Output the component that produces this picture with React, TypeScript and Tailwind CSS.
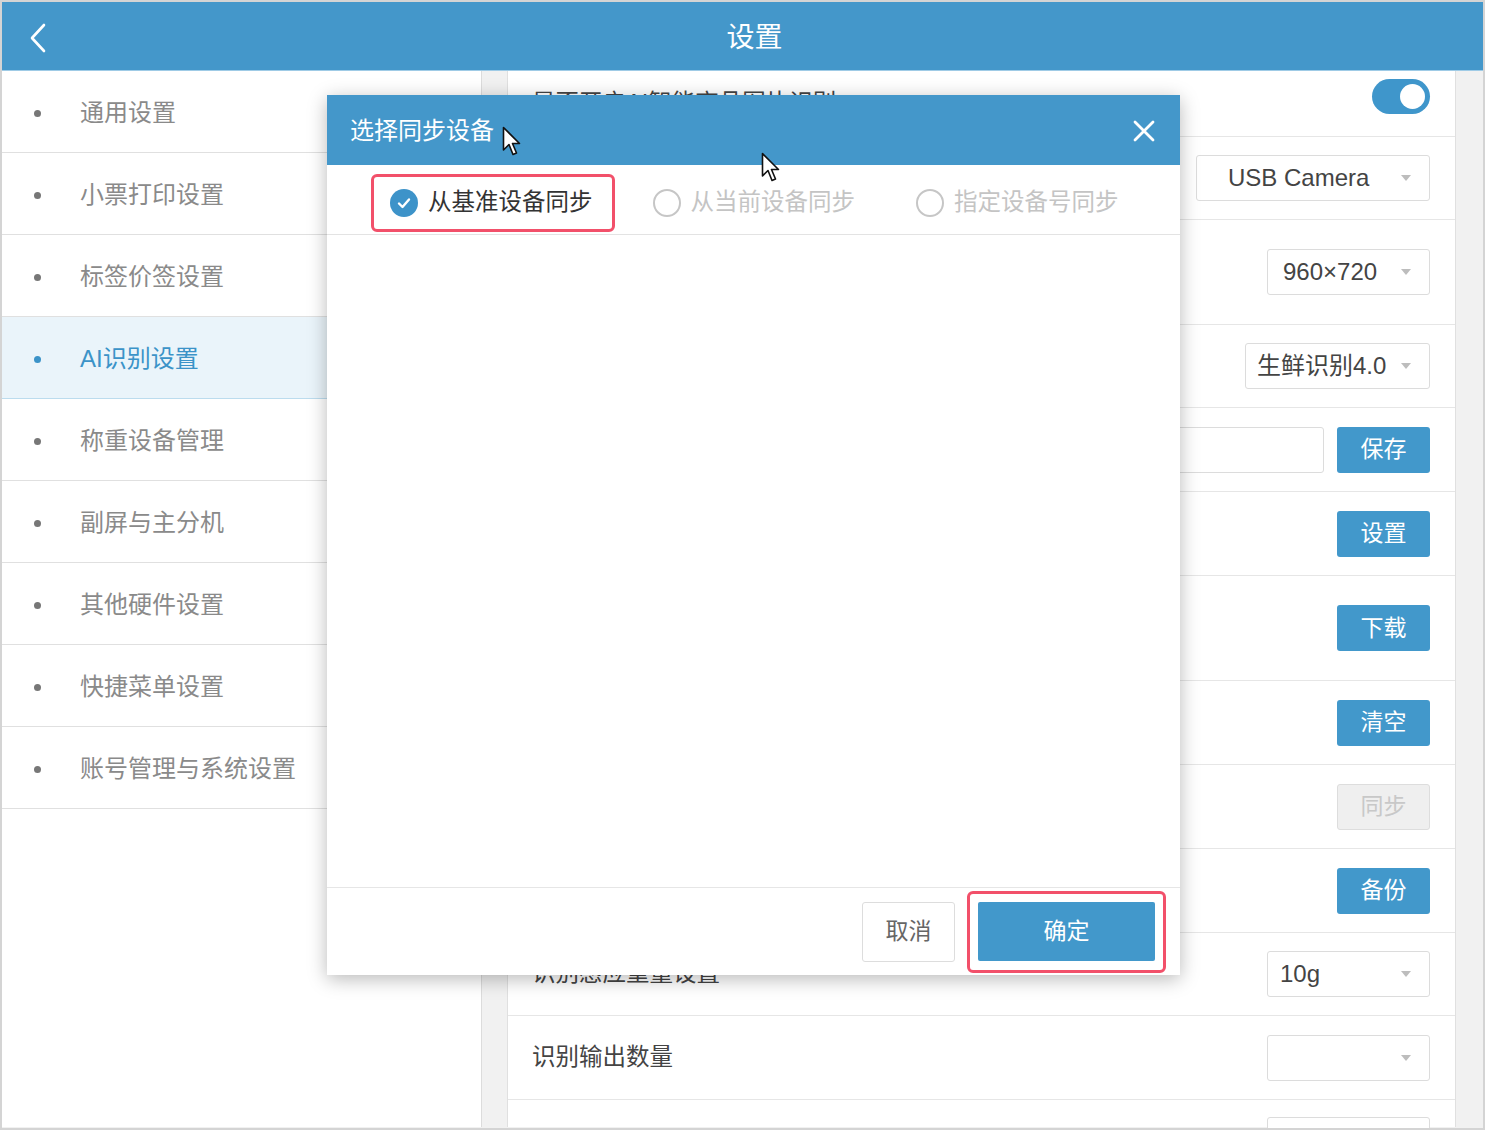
const SIDE = [
  '通用设置',
  '小票打印设置',
  '标签价签设置',
  'AI识别设置',
  '称重设备管理',
  '副屏与主分机',
  '其他硬件设置',
  '快捷菜单设置',
  '账号管理与系统设置',
];

function Caret() {
  return (
    <span className="ml-auto mr-[18px] h-0 w-0 border-l-[5px] border-r-[5px] border-t-[6px] border-l-transparent border-r-transparent border-t-[#bdbdbd]" />
  );
}

function Select({ className, text }: { className: string; text: string }) {
  return (
    <div className={`flex h-[46px] items-center rounded-[3px] border border-[#dcdcdc] bg-white text-[24px] text-[#444] ${className}`}>
      <span>{text}</span>
      <Caret />
    </div>
  );
}

function Btn({ text, disabled }: { text: string; disabled?: boolean }) {
  if (disabled) {
    return (
      <div className="flex h-[46px] w-[93px] items-center justify-center rounded-[3px] border border-[#dddddd] bg-[#efefef] text-[23px] text-[#c8c8c8]">
        {text}
      </div>
    );
  }
  return (
    <div className="flex h-[46px] w-[93px] items-center justify-center rounded-[3px] bg-[#4298cb] text-[23px] text-white">
      {text}
    </div>
  );
}

function Row({ className, label, children }: { className: string; label: string; children: React.ReactNode }) {
  return (
    <div className={`flex items-center border-b border-[#e6e6e6] pl-[24px] pr-[25px] ${className}`}>
      <span className="text-[23.5px] text-[#444]">{label}</span>
      <div className="ml-auto flex items-center gap-[13px]">{children}</div>
    </div>
  );
}

function Cursor() {
  return (
    <svg width="20" height="32" viewBox="0 0 20 32">
      <path
        d="M1.5 1.5 L1.5 24 L7 18.5 L11 28.5 L14.5 27 L10.5 17.5 L17.5 17.5 Z"
        fill="white"
        stroke="#111"
        strokeWidth="1.6"
        strokeLinejoin="round"
      />
    </svg>
  );
}

function Radio({ checked }: { checked?: boolean }) {
  if (checked) {
    return (
      <span className="flex h-[28px] w-[28px] items-center justify-center rounded-full bg-[#3d93c9]">
        <svg width="16" height="16" viewBox="0 0 16 16">
          <path d="M3 8.5 L6.5 12 L13 4.5" fill="none" stroke="white" strokeWidth="2.4" strokeLinecap="round" strokeLinejoin="round" />
        </svg>
      </span>
    );
  }
  return <span className="h-[28px] w-[28px] rounded-full border-2 border-[#c6c6c6]" />;
}

export default function App() {
  return (
    <div className="relative h-[1130px] w-[1485px] overflow-hidden border-2 border-[#d4d4d4] bg-[#f1f1f1] font-['Liberation_Sans','Noto_Sans_CJK_SC',sans-serif]">
      {/* header */}
      <div className="relative flex h-[69px] items-center justify-center border-b border-[#9fcbe6] bg-[#4497ca] pl-[24px] pt-[4px]">
        <svg className="absolute left-[26px] top-[21px]" width="20" height="30" viewBox="0 0 20 30">
          <polyline points="16,2 4,15 16,28" fill="none" stroke="white" strokeWidth="2.6" strokeLinecap="round" strokeLinejoin="round" />
        </svg>
        <span className="text-[28px] text-white">设置</span>
      </div>

      <div className="flex h-[1056px]">
        {/* sidebar */}
        <div className="w-[480px] border-r border-[#dcdcdc] bg-white">
          {SIDE.map((s) => {
            const active = s === 'AI识别设置';
            return (
              <div
                key={s}
                className={
                  active
                    ? 'flex h-[82px] items-center border-b border-[#bcdcee] bg-[#eaf4fa] pl-[32px] pt-[3px]'
                    : 'flex h-[82px] items-center border-b border-[#e0e0e0] pl-[32px] pt-[3px]'
                }
              >
                <span className={active ? 'h-[7px] w-[7px] rounded-full bg-[#3b93c8]' : 'h-[7px] w-[7px] rounded-full bg-[#777]'} />
                <span className={active ? 'ml-[39px] text-[24px] text-[#3b93c8]' : 'ml-[39px] text-[24px] text-[#8a8a8a]'}>{s}</span>
              </div>
            );
          })}
        </div>

        {/* main */}
        <div className="flex flex-1 pl-[25px]">
          <div className="w-[949px] border-l border-r border-[#e0e0e0] bg-white">
            <Row className="h-[66px]" label="是否开启AI智能商品图片识别">
              <div className="mb-[14px] flex h-[35px] w-[58px] items-center justify-end rounded-full bg-[#3f96cb] pr-[5px]">
                <span className="h-[25px] w-[25px] rounded-full bg-white" />
              </div>
            </Row>
            <Row className="h-[83px]" label="摄像头选择">
              <Select className="w-[234px] pl-[31px]" text="USB Camera" />
            </Row>
            <Row className="h-[105px]" label="摄像头分辨率">
              <Select className="w-[163px] pl-[15px]" text="960×720" />
            </Row>
            <Row className="h-[83px]" label="识别模型">
              <Select className="w-[185px] pl-[11px]" text="生鲜识别4.0" />
            </Row>
            <Row className="h-[84px]" label="门店编号">
              <div className="h-[46px] w-[300px] rounded-[3px] border border-[#dcdcdc]" />
              <Btn text="保存" />
            </Row>
            <Row className="h-[84px]" label="识别区域设置">
              <Btn text="设置" />
            </Row>
            <Row className="h-[105px]" label="下载学习数据">
              <Btn text="下载" />
            </Row>
            <Row className="h-[84px]" label="清空学习数据">
              <Btn text="清空" />
            </Row>
            <Row className="h-[84px]" label="同步学习数据">
              <Btn text="同步" disabled />
            </Row>
            <Row className="h-[84px]" label="备份学习数据">
              <Btn text="备份" />
            </Row>
            <Row className="h-[83px]" label="识别感应重量设置">
              <Select className="w-[163px] pl-[12px]" text="10g" />
            </Row>
            <Row className="h-[84px]" label="识别输出数量">
              <Select className="w-[163px] pl-[12px]" text="" />
            </Row>
            <Row className="h-[84px] items-start pt-[17px]" label="">
              <Select className="w-[163px] pl-[12px]" text="" />
            </Row>
          </div>
        </div>
      </div>

      {/* modal */}
      <div className="absolute left-[325px] top-[93px] flex h-[880px] w-[853px] flex-col bg-white shadow-[0_4px_18px_rgba(0,0,0,0.28)]">
        <div className="flex h-[70px] items-center bg-[#4497ca] pl-[23px] pr-[25px] pt-[2px]">
          <span className="text-[24px] text-white">选择同步设备</span>
          <svg className="ml-auto" width="22" height="22" viewBox="0 0 22 22">
            <path d="M2 2 L20 20 M20 2 L2 20" stroke="white" strokeWidth="2.8" strokeLinecap="round" />
          </svg>
        </div>
        <div className="flex h-[70px] items-center border-b border-[#e3e3e3] pl-[44px] pt-[6px]">
          <div className="flex h-[58px] items-center rounded-[6px] border-[3px] border-[#f2506a] pl-[16px] pr-[19px]">
            <Radio checked />
            <span className="ml-[10px] text-[23.5px] text-[#333]">从基准设备同步</span>
          </div>
          <div className="ml-[38px] flex items-center">
            <Radio />
            <span className="ml-[10px] text-[23.5px] text-[#c4c4c4]">从当前设备同步</span>
          </div>
          <div className="ml-[61px] flex items-center">
            <Radio />
            <span className="ml-[10px] text-[23.5px] text-[#c4c4c4]">指定设备号同步</span>
          </div>
        </div>
        <div className="flex-1" />
        <div className="flex h-[88px] items-center justify-end border-t border-[#e6e6e6] pr-[14px]">
          <div className="flex h-[60px] w-[93px] items-center justify-center rounded-[3px] border border-[#dddddd] text-[23px] text-[#666]">
            取消
          </div>
          <div className="ml-[12px] flex h-[82px] w-[199px] items-center justify-center rounded-[6px] border-[3px] border-[#f2506a]">
            <div className="flex h-[59px] w-[177px] items-center justify-center rounded-[2px] bg-[#4298cb] text-[23px] text-white">
              确定
            </div>
          </div>
        </div>
      </div>

      {/* mouse pointers */}
      <div className="absolute left-[500px] top-[124px]">
        <Cursor />
      </div>
      <div className="absolute left-[759px] top-[150px]">
        <Cursor />
      </div>
    </div>
  );
}
